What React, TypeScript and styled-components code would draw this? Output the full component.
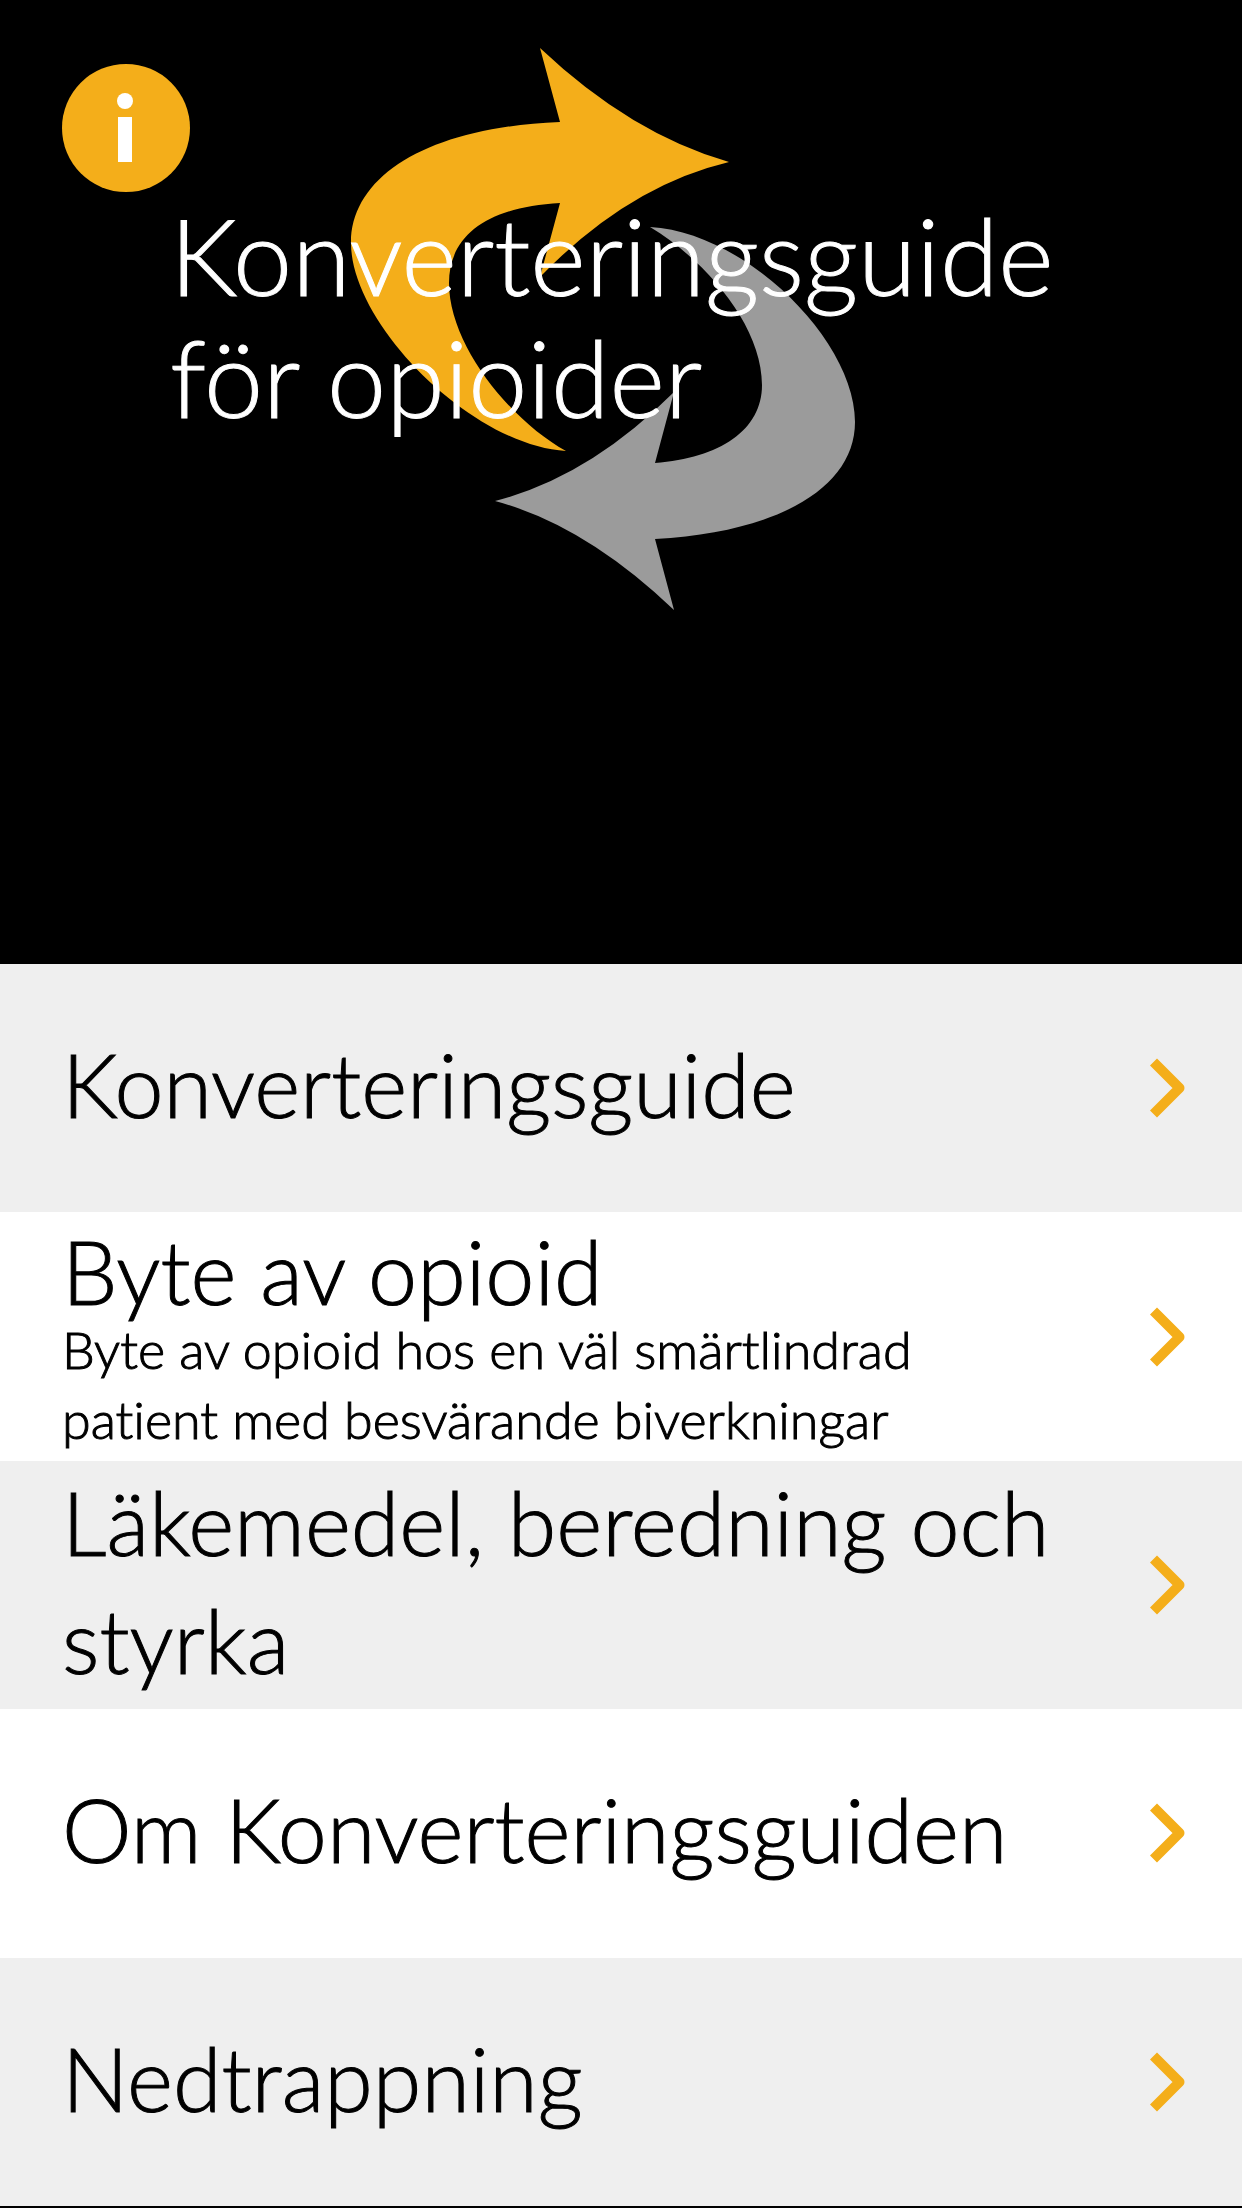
import React from "react";
import styled, { createGlobalStyle } from "styled-components";

const ORANGE = "#f4ae1a";
const GREY = "#9b9b9b";

const GlobalStyle = createGlobalStyle`
  * {
    box-sizing: border-box;
  }
  body {
    margin: 0;
    background: #000;
    font-family: Lato, "Open Sans", sans-serif;
    font-weight: 300;
    font-variant-ligatures: none;
    -webkit-text-stroke: 1px currentColor;
  }
`;

const Page = styled.div`
  display: flex;
  flex-direction: column;
  min-height: 100vh;
  padding-bottom: 2px;
`;

const Hero = styled.header`
  position: relative;
  flex: 1;
  padding: 64px 62px;
  background: #000;
`;

const Artwork = styled.svg`
  position: absolute;
  top: 48px;
  left: calc(50% - 270px);
  width: 504px;
  height: 562px;
`;

const InfoButton = styled.button`
  display: block;
  width: 128px;
  height: 128px;
  padding: 0;
  border: 0;
  border-radius: 50%;
  background: ${ORANGE};
  cursor: pointer;
`;

const Title = styled.h1`
  position: relative;
  max-width: 960px;
  margin: 2px 0 0 108px;
  color: #fff;
  font-size: 106px;
  font-weight: 300;
  line-height: 122px;
`;

const Menu = styled.nav`
  display: flex;
  flex-direction: column;
`;

const MenuLink = styled.a`
  display: flex;
  align-items: center;
  justify-content: space-between;
  gap: 48px;
  min-height: 20vw;
  padding: 0 56px 0 62px;
  color: #000;
  background: #fff;
  text-decoration: none;

  &:nth-child(odd) {
    background: #efefef;
  }
`;

const Labels = styled.span<{ $tight: boolean }>`
  display: flex;
  flex-direction: column;
  padding: ${(p) => (p.$tight ? "8px 0 0" : "0 0 8px")};
`;

const Label = styled.span<{ $tight: boolean }>`
  font-size: 88px;
  line-height: ${(p) => (p.$tight ? "86px" : "118px")};
`;

const Note = styled.span`
  max-width: 900px;
  font-size: 52px;
  line-height: 70px;
`;

const Chevron = styled.svg`
  flex: none;
  width: 36px;
  height: 60px;
`;

interface Item {
  label: string;
  note?: string;
}

const items: Item[] = [
  { label: "Konverteringsguide" },
  {
    label: "Byte av opioid",
    note: "Byte av opioid hos en väl smärtlindrad patient med besvärande biverkningar",
  },
  { label: "Läkemedel, beredning och styrka" },
  { label: "Om Konverteringsguiden" },
  { label: "Nedtrappning" },
];

function Arrows() {
  return (
    <Artwork viewBox="351 48 504 562" aria-hidden="true">
      <path
        fill={ORANGE}
        d="M540 48Q631 134 729 162Q628 186 540 277L560 203C488 207 449 235 449 283C449 345 510 420 566 451C473 446 351 325 351 243C351 175 430 127 560 122Z"
      />
      <path
        fill={GREY}
        d="M674 610Q585 525 495 501Q589 477 674 392L655 463C720 458 762 430 762 385C762 325 705 260 650 227C745 232 855 340 855 422C855 487 780 532 655 539Z"
      />
    </Artwork>
  );
}

export default function App() {
  return (
    <Page>
      <GlobalStyle />
      <Hero>
        <Arrows />
        <InfoButton type="button" aria-label="Information">
          <svg width="128" height="128" viewBox="0 0 128 128" aria-hidden="true">
            <circle cx="63" cy="37" r="8" fill="#fff" />
            <rect x="56" y="53" width="14" height="45" fill="#fff" />
          </svg>
        </InfoButton>
        <Title>Konverteringsguide för opioider</Title>
      </Hero>
      <Menu>
        {items.map((item) => (
          <MenuLink href="#" key={item.label}>
            <Labels $tight={Boolean(item.note)}>
              <Label $tight={Boolean(item.note)}>{item.label}</Label>
              {item.note && <Note>{item.note}</Note>}
            </Labels>
            <Chevron viewBox="0 0 36 60" aria-hidden="true">
              <path
                d="M7 7.5L29.5 30L7 52.5"
                fill="none"
                stroke={ORANGE}
                strokeWidth="10"
                strokeLinejoin="round"
                strokeLinecap="square"
              />
            </Chevron>
          </MenuLink>
        ))}
      </Menu>
    </Page>
  );
}
